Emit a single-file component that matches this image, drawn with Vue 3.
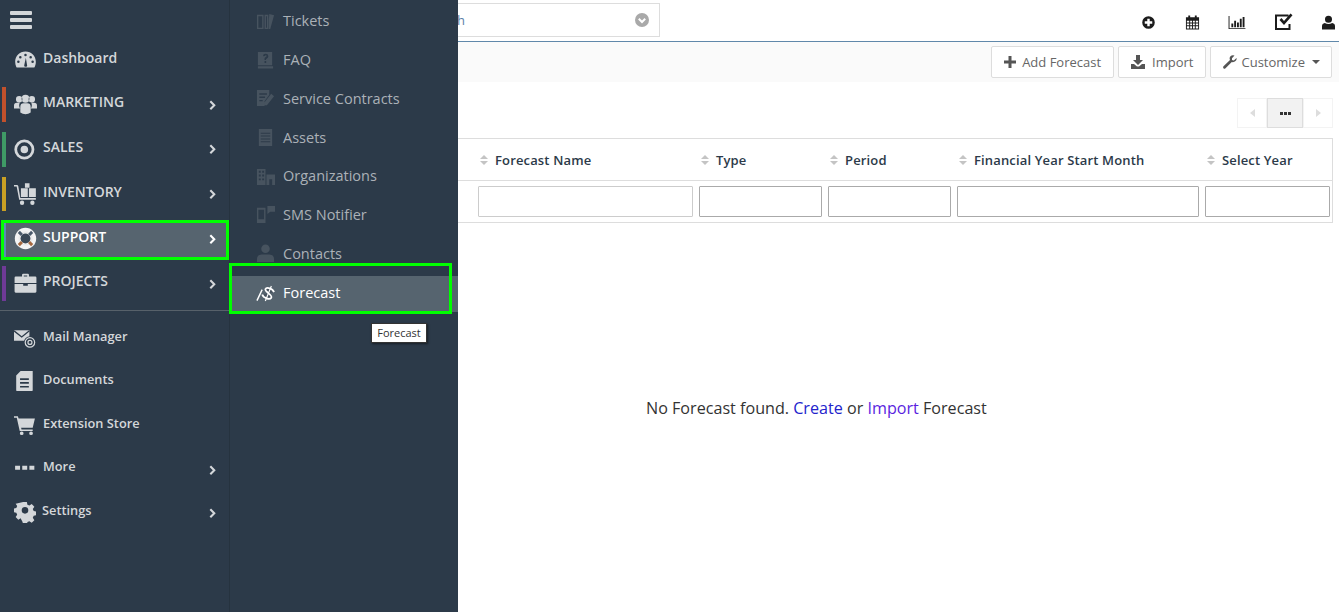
<script setup>
const c = (x, y, r) => `M${x - r} ${y}a${r} ${r} 0 1 0 ${2 * r} 0a${r} ${r} 0 1 0 ${-2 * r} 0Z`
const r = (x, y, w, h) => `M${x} ${y}h${w}v${h}h${-w}Z`

const icons = {
  dashboard: 'M10 3C4.800 3 1 7 1 12c0 1.700.4 3.200 1 4.500c.2.300.5.500.9.500h14.200c.4 0 .7-.2.900-.5c.6-1.300 1-2.800 1-4.500C19 7 15.200 3 10 3Z' + c(10, 6, 1.100) + c(5.500, 8, 1.100) + c(14.500, 8, 1.100) + c(3.800, 12, 1.100) + c(16.200, 12, 1.100) + 'M9 14.500L10.300 8.500L11.300 14.500a1.300 1.300 0 1 1-2.300 0Z',
  users: c(4.500, 5.500, 2.800) + c(15.500, 5.500, 2.800) + c(10, 5, 3.400) + 'M0 13.500V11q0-2.500 2.500-2.500H5q-.5 1-.5 2.300q0 1.500 1 2.700Z M20 13.500V11q0-2.500-2.500-2.500H15q.5 1 .5 2.300q0 1.500-1 2.700Z M5.500 17v-5q0-3 3-3h3q3 0 3 3v5q-2 1.500-4.500 1.500T5.500 17Z',
  sales: c(9, 10, 8.700) + c(9, 10, 6.300) + c(9, 10, 3.300),
  inventory: 'M0 2.500h2.500q1 0 1.200 1L5.500 14H19v1.500H4.500L2.300 4H0Z' + r(9.500, 1, 4, 4) + r(6, 5.500, 6, 7.500) + r(13, 5.500, 6, 7.500) + c(7, 18, 1.900) + c(16, 18, 1.900),
  briefcase: 'M7 4V2.500Q7 1.500 8 1.500h4q1 0 1 1V4h5.500q1 0 1 1v4.500H0.500V5q0-1 1-1ZM8.500 3v1h3V3Z M.5 10.500H8V12h4v-1.500h7.500V17q0 1-1 1H1.500q-1 0-1-1Z',
  doc: 'M6 1H17v17.500q0 .5-.5.5H2.500q-.5 0-.5-.5V5ZM5.500 7.500h8V9h-8Z M5.500 11h8v1.500h-8Z M5.500 14.500h8V16h-8Z',
  cart: 'M0 2h3.500l.7 2H19l-2 8.500H6.500l.3 1.500H17v1.500H5.200L2.500 3.500H0Z' + c(7, 17.500, 1.700) + c(15.500, 17.500, 1.700),
  more: r(1, 8, 4.500, 3.500) + r(7.500, 8, 4.500, 3.500) + r(14, 8, 4.500, 3.500),
  gear: 'M8.300 1h3.400l.5 2.400l1.800.8l2.100-1.400l2.400 2.400l-1.400 2.100l.8 1.800l2.400.5v3.400l-2.400.5l-.8 1.800l1.400 2.100l-2.400 2.400l-2.100-1.400l-1.800.8l-.5 2.400H8.300l-.5-2.400L6 15.600l-2.100 1.400l-2.400-2.400l1.400-2.100l-.8-1.800L-.3 10.200V6.800l2.400-.5l.8-1.800L1.500 2.400z' + c(10, 8.500, 3),
  tickets: 'M1 3h7v15H1ZM2.500 4.500v12h4v-12Z M9 3h4v15H9ZM10.500 4.500v12h1v-12Z M14 2l5 1.500L15 18h-1.500V8Z',
  faq: 'M2 1h15v14H2Z M2 16h16v2.500H2ZM7.500 5.500q0-2.500 2.700-2.500t2.800 2.500q0 1.500-1.500 2.300T10.500 9.500H9V8q0-1.200 1.300-1.800t1-1.200t-1-.6t-1 .9ZM9 10.500h1.700V12.500H9Z',
  contract: 'M1 1h13v5l-5 7v5H1ZM3.500 4.500V6h8V4.500ZM3.500 8V9.500h6V8ZM3.500 11.500V13h3.500v-1.500Z M16 5l3 2.500L11.500 17H9v-3Z',
  assets: 'M3 1h14v18H3ZM5 5v1h10V5ZM5 8v1h10V8ZM5 11v1h10v-1ZM5 14v1h10v-1Z',
  org: 'M1 2h9v17H1ZM3 4v2h2V4ZM6.500 4v2h2V4ZM3 8v2h2V8ZM6.500 8v2h2V8ZM3 12v2h2v-2ZM6.500 12v2h2v-2Z M11 8h9v11h-3v-6h-3v6h-3Z',
  sms: 'M1 3h9v16H1ZM2.500 5v10h6V5ZM12 1h8v6h-5l-3 2.500Z',
  contact: c(10, 5, 4.500) + 'M1 19v-3q0-5 5-5h8q5 0 5 5v3Z'
}

const mainTop = { name: 'Dashboard', icon: 'dashboard' }
const apps = [
  { name: 'MARKETING', icon: 'users', color: '#c2512c' },
  { name: 'SALES', icon: 'sales', color: '#3f9a66' },
  { name: 'INVENTORY', icon: 'inventory', color: '#c9a024' },
  { name: 'SUPPORT', icon: 'support', color: '#5b8bb5', active: true },
  { name: 'PROJECTS', icon: 'briefcase', color: '#6f3a97' }
]
const others = [
  { name: 'Mail Manager', icon: 'mail' },
  { name: 'Documents', icon: 'doc' },
  { name: 'Extension Store', icon: 'cart' },
  { name: 'More', icon: 'more', arrow: true },
  { name: 'Settings', icon: 'gear', arrow: true, tight: true }
]
const subs = [
  { name: 'Tickets', icon: 'tickets' },
  { name: 'FAQ', icon: 'faq' },
  { name: 'Service Contracts', icon: 'contract' },
  { name: 'Assets', icon: 'assets' },
  { name: 'Organizations', icon: 'org' },
  { name: 'SMS Notifier', icon: 'sms' },
  { name: 'Contacts', icon: 'contact' }
]
const cols = ['Forecast Name', 'Type', 'Period', 'Financial Year Start Month', 'Select Year']
</script>

<template>
  <div class="page">
    <aside class="rail">
      <div class="burger"><span></span><span></span><span></span></div>
      <a class="top-item">
        <svg class="ico" viewBox="0 0 20 20"><path :d="icons[mainTop.icon]" fill-rule="evenodd" /></svg>
        <span>{{ mainTop.name }}</span>
      </a>
      <div class="apps">
        <a v-for="a in apps" :key="a.name" class="app" :class="{ active: a.active }">
          <i class="stripe" :style="{ background: a.color }"></i>
          <svg v-if="a.icon === 'support'" class="ico" viewBox="0 0 20 20">
            <circle cx="10" cy="10" r="9.300" fill="#f4f4f4" />
            <circle cx="10" cy="10" r="4.300" fill="#3a4856" />
            <circle cx="10" cy="10" r="5.600" fill="none" stroke="#e8e8e8" stroke-width="1" />
            <path d="M4.200 4.200l2.700 2.700M15.800 4.200l-2.700 2.700" stroke="#4b5a6b" stroke-width="2.600" />
            <path d="M4.200 15.800l2.700-2.700M15.800 15.800l-2.700-2.700" stroke="#a5683f" stroke-width="2.600" />
          </svg>
          <svg v-else class="ico" viewBox="0 0 20 20"><path :d="icons[a.icon]" fill-rule="evenodd" /></svg>
          <span class="label">{{ a.name }}</span>
          <svg class="chev" viewBox="0 0 8 12"><path d="M1.500 1.500L6 6l-4.500 4.500" fill="none" stroke="currentColor" stroke-width="2.400" /></svg>
        </a>
      </div>
      <div class="others">
        <a v-for="o in others" :key="o.name" class="other" :class="{ tight: o.tight }">
          <svg v-if="o.icon === 'mail'" class="ico" viewBox="0 0 20 20">
            <path d="M0 3h14v9.500H0Z" fill="#d4d7da" />
            <path d="M0 3.500l7 5.500l7-5.500" fill="none" stroke="#2c3a49" stroke-width="1.200" />
            <circle cx="14.500" cy="14" r="5.500" fill="#2c3a49" />
            <circle cx="14.500" cy="14" r="4.300" fill="none" stroke="#d4d7da" stroke-width="1.100" />
            <circle cx="14.500" cy="14" r="1.800" fill="none" stroke="#d4d7da" stroke-width="1.100" />
          </svg>
          <svg v-else class="ico" viewBox="0 0 20 20"><path :d="icons[o.icon]" fill-rule="evenodd" /></svg>
          <span class="label">{{ o.name }}</span>
          <svg v-if="o.arrow" class="chev" viewBox="0 0 8 12"><path d="M1.500 1.500L6 6l-4.500 4.500" fill="none" stroke="currentColor" stroke-width="2.400" /></svg>
        </a>
      </div>
    </aside>

    <nav class="submenu">
      <a v-for="s in subs" :key="s.name" class="sub">
        <svg class="sico" viewBox="0 0 20 20"><path :d="icons[s.icon]" fill-rule="evenodd" /></svg>
        <span>{{ s.name }}</span>
      </a>
      <a class="sub current">
        <svg class="sico" viewBox="0 0 20 20" fill="none" stroke="#fff" stroke-width="1.500">
          <path d="M1 18.500L6.500 7" />
          <g transform="rotate(22 13 11)">
            <path d="M18 7.500C15.500 4.500 8.500 5 8.500 8C8.500 11 18 10.500 17.500 14C17 17 10 17.500 7.500 14.500" stroke-width="1.900" />
            <path d="M13 2.500V19.500" stroke-width="1.200" />
          </g>
        </svg>
        <span>Forecast</span>
      </a>
      <i class="mark"></i>
      <div class="tip">Forecast</div>
    </nav>

    <main class="main">
      <header class="topbar">
        <div class="search">
          <span class="stext">h</span>
          <svg class="sdrop" viewBox="0 0 14 14">
            <circle cx="7" cy="7" r="7" fill="#a9a9a9" />
            <path d="M3.800 5.800L7 9l3.200-3.200" fill="none" stroke="#fff" stroke-width="2" />
          </svg>
        </div>
        <div class="quick">
          <svg viewBox="0 0 16 16" class="q"><path fill-rule="evenodd" :d="c(8, 8, 6.700) + 'M6.700 4h2.600v2.700H12v2.600H9.300V12H6.700V9.300H4V6.700h2.700Z'" /></svg>
          <svg viewBox="0 0 16 16" class="q"><path fill-rule="evenodd" d="M1 2.500H3.500V.5h2v2h5V.5h2v2H15V15.500H1ZM2 6v2h2.500V6ZM5.500 6v2h2V6ZM8.500 6v2h2V6ZM11.500 6v2H14V6ZM2 9v2h2.500V9ZM5.500 9v2h2V9ZM8.500 9v2h2V9ZM11.500 9v2H14V9ZM2 12v2.500h2.500V12ZM5.500 12v2.500h2V12ZM8.500 12v2.500h2V12ZM11.500 12v2.500H14V12Z" /></svg>
          <svg viewBox="0 0 18 16" class="q wide"><path d="M0 1h1v13h17v1H0Z M3 9h2v4H3Z M6 6h2v7H6Z M9 8h2v5H9Z M12 4h2v9h-2Z M15 2h2v11h-2Z" /></svg>
          <svg viewBox="0 0 18 18" class="q big"><path d="M0 1.500h13.500v2H2v11.500h11.500V11h2v6H0Z M4.500 7l2-2l2.500 3L15.500 .5l2 1.800L9 12Z" /></svg>
          <svg viewBox="0 0 14 15" class="q small"><path :d="c(7, 4, 3.800) + 'M0 15v-3.500q0-3 3-3.500q4 2 8 0q3 .5 3 3.500v3.500Z'" /></svg>
        </div>
      </header>

      <section class="toolbar">
        <button class="btn">
          <svg viewBox="0 0 12 12" class="bi"><path d="M4.500 0h3v4.500H12v3H7.500V12h-3V7.500H0v-3h4.500Z" /></svg>
          Add Forecast
        </button>
        <button class="btn imp-btn">
          <svg viewBox="0 0 14 14" class="bi big"><path d="M5 0h4v5h3L7 10L2 5h3Z M0 9h3l3 2.500h2L11 9h3v5H0Z" /></svg>
          Import
        </button>
        <button class="btn tight">
          <svg viewBox="0 0 14 14" class="bi big"><path d="M13.500 3l-2.700 2.500L9 5V3.200L11.500.5Q9 -.3 7.500 1.200T7 5L.5 11.200q-.8 1 0 2t2 0L8.800 7q2.200.5 3.700-1t1-3Z" /></svg>
          Customize <i class="caret"></i>
        </button>
      </section>

      <section class="pager-row">
        <div class="pager">
          <span class="pg"><i class="tri left"></i></span>
          <span class="pg mid"><b></b><b></b><b></b></span>
          <span class="pg"><i class="tri right"></i></span>
        </div>
      </section>

      <section class="table">
        <div class="cell blank"></div>
        <div v-for="h in cols" :key="h" class="cell head">
          <span class="sort"><i></i><i></i></span>{{ h }}
        </div>
        <div class="cell blank under"></div>
        <div v-for="h in cols" :key="h + 'f'" class="cell filter"><input type="text" /></div>
      </section>

      <p class="empty">No Forecast found. <a class="create">Create</a> or <a class="imp">Import</a> Forecast</p>
    </main>
  </div>
</template>

<style>
html, body { margin: 0; background: #fff; }
</style>

<style scoped>
.page { display: flex; width: 1339px; height: 612px; overflow: hidden; font-family: "Open Sans", "Noto Sans", sans-serif; color: #333; }
a { text-decoration: none; }

.rail { width: 229px; flex: none; background: #2c3a49; color: #d4d7da; border-right: 1px solid #26333f; font-size: 14px; font-weight: 600; box-sizing: content-box; }
.burger { height: 41px; box-sizing: border-box; padding: 11px 0 0 10px; display: flex; flex-direction: column; gap: 3px; }
.burger span { display: block; width: 22px; height: 4px; background: #d4d7da; border-radius: 1px; }
.ico { width: 23px; height: 23px; fill: #d4d7da; flex: none; }
.top-item { display: flex; align-items: center; height: 36px; padding-left: 14px; gap: 6px; }
.top-item span { margin-top: -4px; }
.apps { display: flex; flex-direction: column; gap: 10px; margin-top: 10px; }
.app { position: relative; display: flex; align-items: center; height: 34.750px; padding: 0 13px 0 14px; gap: 6px; }
.app .label { flex: 1; margin-top: -5px; }
.chev { width: 7px; height: 10.500px; color: #d4d7da; margin-top: 1px; }
.stripe { position: absolute; left: 2px; top: 0; bottom: 0; width: 4px; }
.app.active { color: #fff; }
.app.active::before { content: ""; position: absolute; left: 4px; right: 2px; top: 2px; bottom: -1px; background: #56646f; }
.app.active::after { content: ""; position: absolute; left: 1px; right: 0; top: -1px; bottom: -4px; border: 3px solid #00ff00; box-sizing: border-box; }
.app.active > * { position: relative; z-index: 1; }
.app.active .stripe { position: absolute; left: 4px; top: 2px; bottom: -1px; width: 2px; }
.app.active .chev { color: #fff; }
.others { margin-top: 9px; border-top: 1px solid #57616a; padding-top: 5px; font-size: 12.800px; }
.other { display: flex; align-items: center; height: 43.500px; padding: 0 13px 0 14px; gap: 7px; }
.other .label { flex: 1; margin-top: -4px; }
.other.tight { gap: 6px; }
.other .chev { margin-top: 4px; }
.other .ico { width: 22px; height: 22px; }

.submenu { position: relative; width: 228px; flex: none; background: #2c3a49; color: #abb1b7; font-size: 14.500px; padding-top: 2.100px; box-sizing: border-box; }
.sub { display: flex; align-items: center; height: 38.700px; padding-left: 26px; gap: 8px; }
.sub span { margin-top: -1px; }
.sico { width: 19px; height: 19px; fill: #47535f; flex: none; }
.sub.current { color: #fff; background: linear-gradient(#2c3a49 0 3px, #56646f 3px); height: 39.500px; }
.mark { position: absolute; left: -1px; top: 263px; width: 223px; height: 51px; border: 3px solid #00ff00; box-sizing: border-box; pointer-events: none; }
.tip { position: absolute; left: 141px; top: 323px; width: 56px; height: 20px; background: #fff; color: #333; border: 1px solid #333; box-shadow: 1px 1px 2px rgba(0, 0, 0, .5); font-size: 11px; line-height: 18px; text-align: center; box-sizing: border-box; }

.main { flex: 1; display: flex; flex-direction: column; min-width: 0; }
.topbar { height: 42px; flex: none; border-bottom: 1px solid #6088aa; box-sizing: border-box; display: flex; align-items: flex-start; justify-content: space-between; }
.search { width: 202px; height: 34px; margin-top: 3px; border: 1px solid #ddd; border-left: 0; box-sizing: border-box; display: flex; align-items: center; justify-content: space-between; padding-right: 10px; }
.stext { font-size: 13px; color: #5b7fa8; margin-left: -1px; }
.sdrop { width: 14px; height: 14px; }
.quick { display: flex; align-items: center; padding: 13px 4px 0 0; }
.q { width: 15px; height: 15px; fill: #1c1c1c; margin-left: 29px; }
.q.wide { width: 18px; margin-left: 28px; }
.q.big { width: 18px; height: 18px; margin-left: 29px; }
.q.small { width: 13px; height: 15px; margin-left: 29px; }

.toolbar { height: 40px; flex: none; background: #fafafa; display: flex; justify-content: flex-end; align-items: flex-start; gap: 4px; padding: 4px 7px 0 0; box-sizing: border-box; }
.btn { height: 32px; padding: 0 12px; background: #fff; border: 1px solid #ddd; border-radius: 2px; color: #666; font: 13px "Open Sans", sans-serif; display: flex; align-items: center; gap: 6px; white-space: nowrap; }
.btn.imp-btn { gap: 7px; }
.btn.tight { padding: 0 11px 0 12px; gap: 4px; }
.bi { width: 12px; height: 12px; fill: #555; }
.bi.big { width: 14px; height: 14px; }
.caret { width: 0; height: 0; margin-left: 3px; border: 4px solid transparent; border-top-color: #555; border-bottom: 0; }

.pager-row { height: 56px; flex: none; display: flex; justify-content: flex-end; padding: 16px 6px 0 0; box-sizing: border-box; }
.pager { display: flex; height: 30px; }
.pg { width: 30px; border: 1px solid #f3f3f3; box-sizing: border-box; display: flex; align-items: center; justify-content: center; gap: 1px; }
.pg.mid { width: 36px; background: #f2f2f2; border-color: #ddd; }
.pg b { width: 3px; height: 3px; background: #333; }
.tri { border: 4px solid transparent; width: 0; height: 0; }
.tri.left { border-right: 5px solid #ddd; border-left: 0; }
.tri.right { border-left: 5px solid #ddd; border-right: 0; }

.table { width: 875px; display: grid; grid-template-columns: 17px 221px 129px 129px 248px 131px; grid-template-rows: 42px 42px; border-top: 1px solid #ddd; border-right: 1px solid #ddd; box-sizing: border-box; flex: none; }
.cell { border-bottom: 1px solid #ddd; box-sizing: border-box; }
.head { display: flex; align-items: center; padding-left: 5px; font-size: 13px; font-weight: 600; letter-spacing: .15px; color: #2c3a49; white-space: nowrap; }
.sort { display: flex; flex-direction: column; gap: 2px; margin-right: 7px; }
.sort i { width: 0; height: 0; border: 4px solid transparent; }
.sort i:first-child { border-bottom: 4px solid #c4c4c4; border-top: 0; }
.sort i:last-child { border-top: 4px solid #c4c4c4; border-bottom: 0; }
.filter { padding: 5px 3px 0; }
.filter input { display: block; width: 100%; height: 31px; box-sizing: border-box; border: 1px solid #aaa; background: #fff; padding: 0; border-radius: 1px; outline: 0; }
.filter:nth-child(8) input { border-color: #ccc; }

.empty { margin: 174px 0 0 188px; font-size: 16.140px; line-height: 22px; color: #333; white-space: nowrap; }
.create { color: #2323cc; }
.imp { color: #5a1fe0; }
</style>
